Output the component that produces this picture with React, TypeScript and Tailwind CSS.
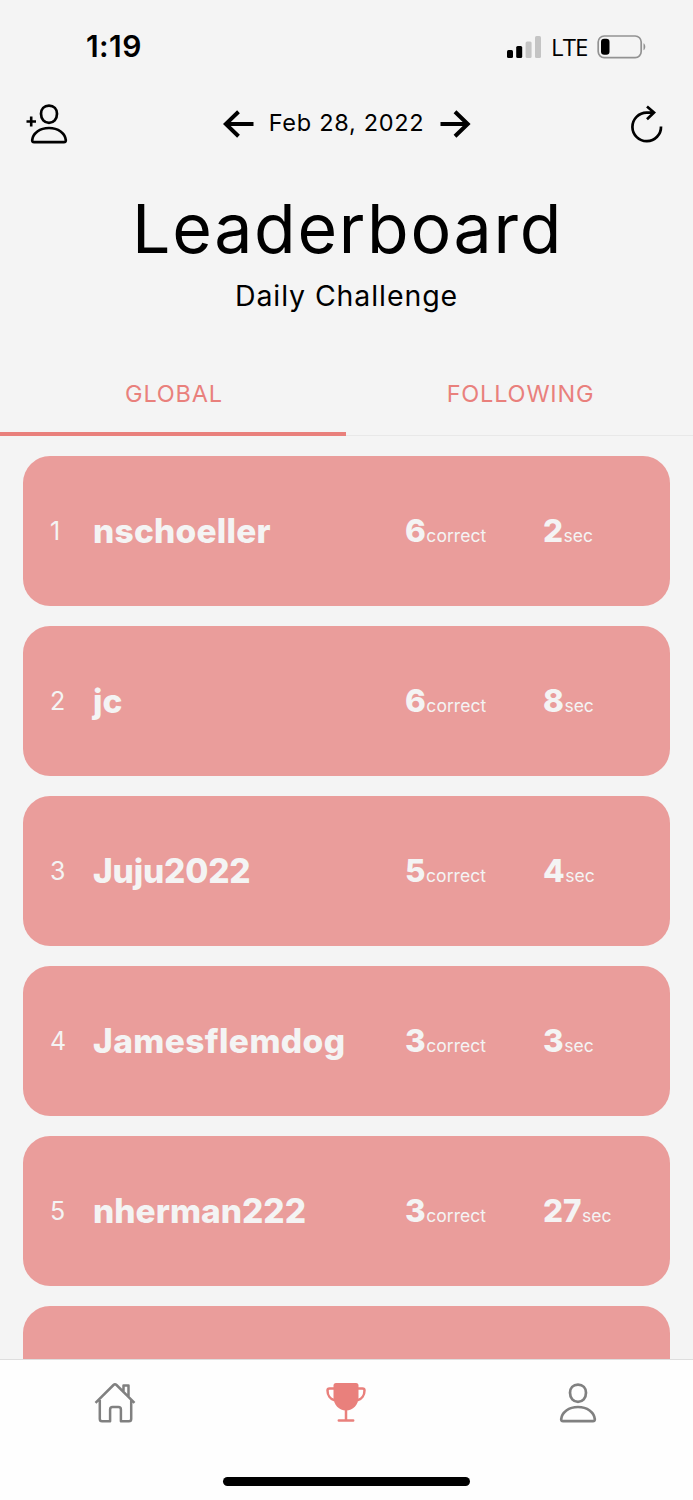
import React from "react";

type Entry = {
  rank: number;
  name: string;
  correct: string;
  seconds: string;
  nameClass: string;
};

const entries: Entry[] = [
  { rank: 1, name: "nschoeller", correct: "6", seconds: "2", nameClass: "tracking-[0.2px]" },
  { rank: 2, name: "jc", correct: "6", seconds: "8", nameClass: "tracking-[0px]" },
  { rank: 3, name: "Juju2022", correct: "5", seconds: "4", nameClass: "tracking-[-0.2px]" },
  { rank: 4, name: "Jamesflemdog", correct: "3", seconds: "3", nameClass: "tracking-[0.4px]" },
  { rank: 5, name: "nherman222", correct: "3", seconds: "27", nameClass: "tracking-[0px]" },
];

function Person({ className }: { className: string }) {
  return (
    <svg viewBox="0 0 38 40" className={className} fill="none" stroke="currentColor" strokeWidth="2.700" strokeLinejoin="round">
      <path d="M19 1.6c-4.900 0-8 3.500-8 8.200 0 5.300 3.400 9 8 9s8-3.700 8-9c0-4.700-3.100-8.200-8-8.200Z" />
      <path d="M4.100 38.200h29.800c1.500 0 2-.8 1.900-2C35.200 29.300 28.200 24 19 24S2.800 29.300 2.200 36.200c-.1 1.200.4 2 1.900 2Z" />
    </svg>
  );
}

function StatusBar() {
  return (
    <div className="flex h-[92px] shrink-0 items-start justify-between pl-[86px] pr-[46px] pt-[28px]">
      <div className="font-['Inter'] text-[30px] font-semibold leading-[37px] tracking-[0.4px]">1:19</div>
      <div className="flex h-[37px] items-center">
        <svg width="36" height="24" viewBox="0 0 36 24">
          <rect x="1" y="15" width="6" height="8" rx="1.500" />
          <rect x="10.200" y="11" width="6" height="12" rx="1.500" />
          <rect x="19.600" y="6.500" width="6" height="16.500" rx="1.500" fill="#c4c4c4" />
          <rect x="29" y="1" width="6" height="22" rx="1.500" fill="#c4c4c4" />
        </svg>
        <span className="ml-[9px] w-[37px] font-['Open_Sans'] text-[24px] font-medium leading-[37px] tracking-[-0.9px]">LTE</span>
        <svg className="ml-[9px]" width="50" height="24" viewBox="0 0 50 24">
          <rect x="1.200" y="1" width="43" height="21.600" rx="6" fill="none" stroke="#929292" strokeWidth="1.700" />
          <rect x="4" y="3.800" width="8.500" height="16" rx="3.200" />
          <path d="M46.500 8.300c2.400 1.300 2.400 5.700 0 7Z" fill="#929292" />
        </svg>
      </div>
    </div>
  );
}

function Header() {
  return (
    <header className="flex h-[68px] shrink-0 items-start justify-between pl-[26px] pr-[30px] pt-[11px]">
      <button aria-label="Add friend" className="flex h-[42px] w-[171px] items-start">
        <svg className="mt-[13px]" width="10" height="11" viewBox="0 0 10 11" stroke="black" strokeWidth="2.600">
          <path d="M.5 5.500H10M5.200.5v10" />
        </svg>
        <Person className="-ml-[6px] mt-px h-[40px] w-[38px]" />
      </button>
      <div className="flex h-[42px] items-center">
        <svg width="31" height="28" viewBox="0 0 31 28" fill="none" stroke="black" strokeWidth="4">
          <path d="M30.500 14H3M15.500 1.800 2.800 14l12.700 12.200" />
        </svg>
        <span className="-mt-[3px] ml-[14px] mr-[15px] w-[157px] whitespace-nowrap text-center text-[23.500px] leading-[38px] tracking-[0.700px]">Feb 28, 2022</span>
        <svg width="31" height="28" viewBox="0 0 31 28" fill="none" stroke="black" strokeWidth="4">
          <path d="M.5 14H28M15 1.800 27.700 14 15 26.200" />
        </svg>
      </div>
      <button aria-label="Refresh" className="flex h-[42px] w-[166px] items-start justify-end">
        <svg className="mt-[2px]" width="33" height="38" viewBox="0 0 33 38" fill="none" stroke="black" strokeWidth="2.700">
          <path d="M31 21.500A14.300 14.300 0 1 1 16.700 7.600h7M17 1.500l7 6.100-7 6.600" />
        </svg>
      </button>
    </header>
  );
}

function Tabs() {
  return (
    <div className="grid h-[76px] shrink-0 grid-cols-[346px_347px] text-center text-[#e9807c]">
      <button className="border-b-[4px] border-[#e9807c] pb-[5px] pl-[2px] text-[23.500px] leading-7 tracking-[0.8px]">GLOBAL</button>
      <button className="border-b border-[#e8e8e8] pb-[8px] pl-[2px] text-[23.500px] leading-7 tracking-[0.8px]">FOLLOWING</button>
    </div>
  );
}

function Card({ entry }: { entry: Entry }) {
  return (
    <li className="flex h-[149.500px] shrink-0 items-center rounded-[27px] bg-[#ea9d9b] pl-[27px] text-[#f4f4f4]">
      <span className="w-[43px] pt-px text-[25px] leading-9">{entry.rank}</span>
      <span className={`w-[312px] text-[33.500px] font-extrabold leading-10 ${entry.nameClass}`}>{entry.name}</span>
      <span className="flex w-[138px] items-baseline pt-px">
        <b className="text-[31.500px] font-extrabold leading-10">{entry.correct}</b>
        <span className="ml-[0.500px] text-[17.500px] tracking-[0.05px]">correct</span>
      </span>
      <span className="flex items-baseline pt-px">
        <b className="text-[31.500px] font-extrabold leading-10">{entry.seconds}</b>
        <span className="ml-[0.500px] text-[17.500px]">sec</span>
      </span>
    </li>
  );
}

function BottomNav() {
  return (
    <nav className="flex h-[141px] shrink-0 flex-col items-center border-t border-[#dedede] bg-[#fefefe]">
      <div className="grid h-[117px] w-full grid-cols-[230px_232px_231px] justify-items-center pt-[22px] text-[#808080]">
        <button aria-label="Home" className="h-[42px]">
          <svg width="42" height="42" viewBox="0 0 42 42" fill="none" stroke="currentColor" strokeWidth="2.500" strokeLinejoin="round">
            <path d="M1.500 20.800 19.500 3q1.500-1.500 3 0l18 17.800M5.800 18v19q0 2.300 2.300 2.300h8V27.500q0-2.500 2.500-2.500h5.800q2.500 0 2.500 2.500v11.800h8q2.300 0 2.300-2.300V18M29.500 9.500V3.500h5v11" />
          </svg>
        </button>
        <button aria-label="Leaderboard" className="h-[42px]">
          <svg width="42" height="42" viewBox="0 0 42 42" fill="none" stroke="#e9807c" strokeWidth="2.500">
            <path d="M8.500 3.500q0-2.500 2.500-2.500h20q2.500 0 2.500 2.500V15c0 8-5.500 13.500-12.500 13.500S8.500 23 8.500 15Z" fill="#e9807c" stroke="none" />
            <path d="M9 6.500H4.500q-2 0-2 2c0 5 3 8.500 6.500 9.500M33 6.500h4.500q2 0 2 2c0 5-3 8.500-6.500 9.500M21 28v10M13.800 38.500h14.400" strokeLinecap="round" />
          </svg>
        </button>
        <button aria-label="Profile" className="h-[42px]">
          <Person className="h-[40px] w-[38px]" />
        </button>
      </div>
      <div className="h-[9px] w-[247px] rounded-full bg-black" />
    </nav>
  );
}

export default function App() {
  return (
    <div className="flex h-[1500px] w-[693px] flex-col overflow-hidden bg-[#f4f4f4] font-['Inter',sans-serif] text-black">
      <StatusBar />
      <Header />
      <section className="flex h-[200px] shrink-0 flex-col items-center pt-[28px]">
        <h1 className="pl-[2px] text-[68px] leading-[80px] tracking-[1.700px]">Leaderboard</h1>
        <p className="mt-[8px] text-[28.500px] leading-[40px] tracking-[0.900px]">Daily Challenge</p>
      </section>
      <Tabs />
      <main className="h-[923px] overflow-hidden px-[23px] pt-[20px]">
        <ul className="flex flex-col gap-[20.500px]">
          {entries.map((entry) => (
            <Card key={entry.rank} entry={entry} />
          ))}
          <li className="h-[150px] shrink-0 rounded-[27px] bg-[#ea9d9b]" />
        </ul>
      </main>
      <BottomNav />
    </div>
  );
}
